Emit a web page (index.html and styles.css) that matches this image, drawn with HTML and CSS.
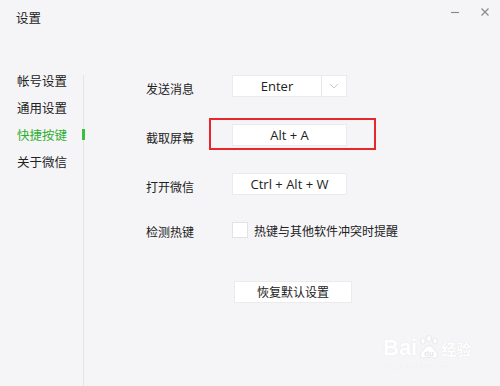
FILE: index.html
```html
<!DOCTYPE html>
<html lang="zh-CN">
<head>
<meta charset="utf-8">
<title>设置</title>
<link rel="stylesheet" href="styles.css">
</head>
<body>
<div class="window">
  <header class="titlebar">
    <span class="title">设置</span>
    <div class="controls">
      <svg class="ctl" width="10" height="10" viewBox="0 0 10 10"><path d="M1 5.5h8" stroke="#8a8a8a" stroke-width="1.2"/></svg>
      <svg class="ctl" width="10" height="10" viewBox="0 0 10 10"><path d="M1.5 1.5l7 7M8.5 1.5l-7 7" stroke="#8a8a8a" stroke-width="1.2"/></svg>
    </div>
  </header>
  <div class="main">
    <nav class="sidebar">
      <div class="nav-item">帐号设置</div>
      <div class="nav-item">通用设置</div>
      <div class="nav-item active">快捷按键</div>
      <div class="nav-item">关于微信</div>
    </nav>
    <section class="content">
      <div class="form">
        <div class="label">发送消息</div>
        <div class="field select">
          <span class="value">Enter</span>
          <span class="arrow"><svg width="10" height="6" viewBox="0 0 10 6"><path d="M1 1l4 4 4-4" fill="none" stroke="#c8c8c8" stroke-width="1"/></svg></span>
        </div>
        <div class="label">截取屏幕</div>
        <div class="field highlight"><span class="value">Alt + A</span></div>
        <div class="label">打开微信</div>
        <div class="field"><span class="value">Ctrl + Alt + W</span></div>
        <div class="label label-check">检测热键</div>
        <label class="check"><span class="box"></span><span class="check-text">热键与其他软件冲突时提醒</span></label>
      </div>
      <button class="reset">恢复默认设置</button>
    </section>
  </div>
  <div class="watermark">
    <div class="wm-logo">
      <span class="wm-bai">Bai</span>
      <svg class="wm-paw" width="22" height="24" viewBox="0 0 22 24">
        <g fill="#fff" stroke="#e2e2e2" stroke-width="0.8">
          <ellipse cx="5" cy="6" rx="2.4" ry="3"/>
          <ellipse cx="11" cy="3.5" rx="2.4" ry="3"/>
          <ellipse cx="17" cy="6" rx="2.4" ry="3"/>
          <path d="M3 22c-2-3 2-6 4-9 2-3 6-3 8 0 2 3 6 6 4 9-2 2-5 0-8 0s-6 2-8 0z"/>
        </g>
        <text x="11" y="21" text-anchor="middle" font-size="8" font-family="Liberation Sans, sans-serif" font-weight="bold" fill="#e6e6e6">du</text>
      </svg>
      <span class="wm-jy">经验</span>
    </div>
    <div class="wm-sub">jingyan.baidu.com</div>
  </div>
</div>
</body>
</html>
```
FILE: styles.css
```css
* { box-sizing: border-box; }
html, body { margin: 0; padding: 0; }
body {
  width: 500px;
  height: 386px;
  background: #f5f5f7;
  font-family: "Noto Sans CJK SC", "Noto Sans", sans-serif;
  color: #222;
  overflow: hidden;
}
.window {
  position: relative;
  width: 500px;
  height: 386px;
  display: flex;
  flex-direction: column;
}
.titlebar {
  height: 67px;
  display: flex;
  align-items: flex-start;
  justify-content: space-between;
  padding: 9px 10px 0 16px;
}
.title {
  font-size: 12.5px;
  line-height: 18px;
  color: #222;
}
.controls {
  display: flex;
  gap: 20px;
  margin-top: -2px;
}
.ctl { display: block; }
.main {
  flex: 1;
  display: flex;
}
.sidebar {
  width: 84px;
  display: flex;
  flex-direction: column;
  background: linear-gradient(#e4e4e6, #e4e4e6) right 8px / 1px calc(100% - 8px) no-repeat;
}
.nav-item {
  position: relative;
  height: 27px;
  line-height: 27px;
  padding-left: 17px;
  font-size: 12.5px;
  color: #222;
}
.nav-item.active { color: #2fae32; }
.nav-item.active::after {
  content: "";
  position: absolute;
  right: -1px;
  top: 8px;
  width: 3px;
  height: 11px;
  background: #3cbf3c;
}
.content {
  flex: 1;
  padding: 8px 0 0 62px;
  display: flex;
  flex-direction: column;
  align-items: flex-start;
}
.form {
  display: grid;
  grid-template-columns: 86px auto;
  grid-auto-rows: 22px;
  row-gap: 27px;
  align-items: center;
}
.form > .check { height: 16px; align-self: start; }
.label {
  font-size: 12px;
  color: #222;
  padding-top: 4px;
}
.label-check {
  align-self: start;
  padding-top: 1px;
}
.field {
  position: relative;
  width: 115px;
  height: 22px;
  background: #fff;
  border: 1px solid #ebebed;
  display: flex;
  align-items: center;
  font-family: "Open Sans", "Noto Sans", sans-serif;
  font-size: 13px;
  color: #222;
}
.field .value {
  flex: 1;
  text-align: center;
  line-height: 20px;
}
.select .arrow {
  width: 25px;
  height: 100%;
  border-left: 1px solid #e6e6e8;
  display: flex;
  align-items: center;
  justify-content: center;
}
.highlight::after {
  content: "";
  position: absolute;
  top: -7px;
  bottom: -5px;
  left: -24px;
  right: -30px;
  border: 2px solid #e8272b;
}
.check {
  display: flex;
  align-items: center;
  gap: 6px;
}
.box {
  width: 16px;
  height: 16px;
  background: #fff;
  border: 1px solid #e3e3e5;
}
.check-text {
  font-size: 12px;
  color: #222;
  line-height: 16px;
  padding-top: 2px;
}
.reset {
  margin: 37px 0 0 88px;
  width: 118px;
  height: 22px;
  padding: 0;
  background: #fff;
  border: 1px solid #ebebed;
  font-family: "Noto Sans CJK SC", sans-serif;
  font-size: 12px;
  color: #222;
  line-height: 20px;
}
.watermark {
  position: absolute;
  left: 383px;
  top: 333px;
  color: #fff;
}
.wm-logo {
  display: flex;
  align-items: flex-end;
  height: 26px;
}
.wm-bai {
  font-family: "Liberation Sans", sans-serif;
  font-weight: bold;
  font-size: 22px;
  line-height: 22px;
  color: #fff;
  text-shadow: 0 0 1px #d8d8d8;
}
.wm-paw { display: block; margin: 0 1px; }
.wm-jy {
  font-size: 15px;
  line-height: 20px;
  font-weight: bold;
  color: #fff;
  text-shadow: 0 0 1px #d8d8d8;
}
.wm-sub {
  font-family: "Liberation Sans", sans-serif;
  font-size: 7px;
  color: #fff;
  text-shadow: 0 0 1px #dcdcdc;
  margin-top: 3px;
  letter-spacing: 0.6px;
}
```
